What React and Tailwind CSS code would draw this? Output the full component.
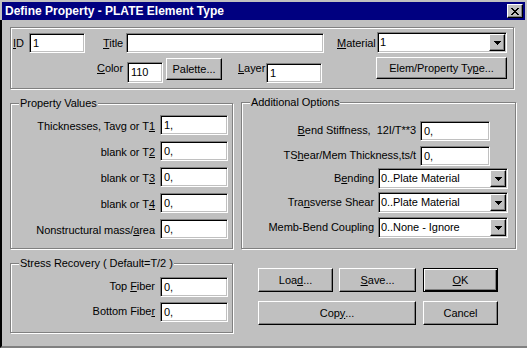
import React from "react";

const font = "font-['Liberation_Sans',Arial,sans-serif]";
const sunken =
  "bg-white border border-t-[#808080] border-l-[#808080] border-r-white border-b-white shadow-[inset_1px_1px_0_#000,inset_-1px_-1px_0_#c0c0c0]";
const raised =
  "bg-[#c0c0c0] border border-t-white border-l-white border-r-black border-b-black shadow-[inset_-1px_-1px_0_#808080]";
const defBtn =
  "bg-[#c0c0c0] border border-black shadow-[inset_1px_1px_0_#fff,inset_-1px_-1px_0_#000,inset_-2px_-2px_0_#808080]";

function U({ children }) {
  return <span className="underline decoration-1 underline-offset-[1px]">{children}</span>;
}

function Field({ className = "", children }) {
  return (
    <div className={`${sunken} flex items-center pl-[3px] whitespace-nowrap shrink-0 ${className}`}>
      {children}
    </div>
  );
}

function Arrow() {
  return (
    <svg width="7" height="4" viewBox="0 0 7 4" shapeRendering="crispEdges">
      <rect x="0" y="0" width="7" height="1" fill="#000" />
      <rect x="1" y="1" width="5" height="1" fill="#000" />
      <rect x="2" y="2" width="3" height="1" fill="#000" />
      <rect x="3" y="3" width="1" height="1" fill="#000" />
    </svg>
  );
}

function Select({ className = "", children }) {
  return (
    <div className={`${sunken} h-[21px] flex items-center shrink-0 ${className}`}>
      <span className="flex-1 pl-[2px] whitespace-nowrap overflow-hidden">{children}</span>
      <div className={`${raised} w-[16px] h-[17px] mr-[1px] flex items-center justify-center`}>
        <Arrow />
      </div>
    </div>
  );
}

function Btn({ className = "", def = false, children }) {
  return (
    <div
      className={`${def ? defBtn : raised} flex items-center justify-center whitespace-nowrap shrink-0 ${className}`}
    >
      {children}
    </div>
  );
}

function Group({ label, className = "", children }) {
  return (
    <div
      className={`relative shrink-0 border border-[#808080] shadow-[inset_1px_1px_0_#fff,1px_1px_0_#fff] ${className}`}
    >
      {label && (
        <span className="absolute left-[8px] top-[-7px] px-[1px] bg-[#c0c0c0] leading-[13px] whitespace-nowrap">
          {label}
        </span>
      )}
      {children}
    </div>
  );
}

function CloseX() {
  const rows = ["11000011", "01100110", "00111100", "00011000", "00111100", "01100110", "11000011"];
  const rects = [];
  rows.forEach((r, y) =>
    [...r].forEach((c, x) => {
      if (c === "1") rects.push(<rect key={`${x}-${y}`} x={x} y={y} width="1" height="1" fill="#000" />);
    })
  );
  return (
    <svg width="8" height="7" viewBox="0 0 8 7" shapeRendering="crispEdges">
      {rects}
    </svg>
  );
}

function PRow({ label, value, lt = "mt-[5px]" }) {
  return (
    <div className="flex items-start">
      <span className={`${lt} mr-[5px] whitespace-nowrap`}>{label}</span>
      <Field className="w-[68px] h-[20px]">{value}</Field>
    </div>
  );
}

export default function App() {
  return (
    <div
      className={`w-[527px] h-[348px] bg-[#c0c0c0] flex flex-col overflow-hidden text-black text-[11px] tracking-[-0.05px] leading-[13px] ${font}`}
    >
      {/* Title bar */}
      <div className="h-[20px] px-[2px] pt-[2px] shrink-0">
        <div className="h-[18px] bg-[#000080] flex items-center pl-[3px] pr-[2px]">
          <span className="text-white font-bold text-[12px] tracking-normal whitespace-nowrap">
            Define Property - PLATE Element Type
          </span>
          <div className={`${raised} ml-auto w-[16px] h-[14px] flex items-center justify-center`}>
            <CloseX />
          </div>
        </div>
      </div>

      {/* Body */}
      <div className="flex-1 border-l-2 border-l-black border-b-2 border-b-[#808080] pl-[8px] pt-[7px]">
        {/* Top group */}
        <Group className="w-[504px] h-[62px]">
          <div className="flex items-start mt-[4px]">
            <span className="ml-[2px] w-[16px] mt-[5px] shrink-0">
              <U>I</U>D
            </span>
            <Field className="w-[56px] h-[20px] mt-[1px]">1</Field>
            <span className="ml-[18px] w-[23px] mt-[5px] shrink-0">
              <U>T</U>itle
            </span>
            <Field className="w-[198px] h-[20px] mt-[1px]" />
            <span className="ml-[13px] w-[40px] mt-[5px] shrink-0">
              <U>M</U>aterial
            </span>
            <Select className="w-[130px]">1</Select>
          </div>
          <div className="flex items-start mt-[4px]">
            <span className="ml-[86px] w-[30px] mt-[5px] shrink-0">
              <U>C</U>olor
            </span>
            <Field className="w-[36px] h-[21px] mt-[5px]">110</Field>
            <Btn className="ml-[3px] w-[56px] h-[22px] mt-[1px]">Palette...</Btn>
            <span className="ml-[16px] w-[28px] mt-[5px] shrink-0">
              <U>L</U>ayer
            </span>
            <Field className="w-[56px] h-[20px] mt-[6px]">1</Field>
            <Btn className="ml-[54px] w-[131px] h-[22px]">
              Elem/Property Ty<U>p</U>e...
            </Btn>
          </div>
        </Group>

        {/* Middle row */}
        <div className="flex items-start mt-[13px]">
          <Group label="Property Values" className="w-[223px] h-[146px] mt-[1px]">
            <div className="flex flex-col items-end pr-[4px] pt-[11px] gap-[6px]">
              <PRow
                label={
                  <>
                    Thicknesses, Tavg or T<U>1</U>
                  </>
                }
                value="1,"
              />
              <PRow
                label={
                  <>
                    blank or T<U>2</U>
                  </>
                }
                value="0,"
              />
              <PRow
                label={
                  <>
                    blank or T<U>3</U>
                  </>
                }
                value="0,"
              />
              <PRow
                label={
                  <>
                    blank or T<U>4</U>
                  </>
                }
                value="0,"
              />
              <PRow
                label={
                  <>
                    Nonstructural mass/<U>a</U>rea
                  </>
                }
                value="0,"
              />
            </div>
          </Group>

          <Group label="Additional Options" className="ml-[8px] w-[275px] h-[147px]">
            <div className="flex flex-col items-end pt-[18px]">
              <div className="flex items-start mr-[25px]">
                <span className="mt-[3px] mr-[4px] whitespace-nowrap">
                  <U>B</U>end Stiffness,{"\u00a0"} 12I/T**3
                </span>
                <Field className="w-[70px] h-[20px]">0,</Field>
              </div>
              <div className="flex items-start mr-[25px] mt-[5px]">
                <span className="mt-[3px] mr-[4px] whitespace-nowrap">
                  TS<U>h</U>ear/Mem Thickness,ts/t
                </span>
                <Field className="w-[70px] h-[20px]">0,</Field>
              </div>
              <div className="flex items-start mr-[7px] mt-[2px]">
                <span className="mt-[4px] mr-[4px] whitespace-nowrap">
                  B<U>e</U>nding
                </span>
                <Select className="w-[130px]">0..Plate Material</Select>
              </div>
              <div className="flex items-start mr-[7px] mt-[3px]">
                <span className="mt-[4px] mr-[4px] whitespace-nowrap">
                  Tra<U>n</U>sverse Shear
                </span>
                <Select className="w-[130px]">0..Plate Material</Select>
              </div>
              <div className="flex items-start mr-[7px] mt-[4px]">
                <span className="mt-[4px] mr-[4px] whitespace-nowrap">Memb-Bend Coupling</span>
                <Select className="w-[130px]">0..None - Ignore</Select>
              </div>
            </div>
          </Group>
        </div>

        {/* Bottom row */}
        <div className="flex items-start mt-[14px]">
          <Group label="Stress Recovery ( Default=T/2 )" className="w-[223px] h-[70px]">
            <div className="flex flex-col items-end pr-[4px] pt-[13px] gap-[5px]">
              <PRow
                lt="mt-[3px]"
                label={
                  <>
                    Top <U>F</U>iber
                  </>
                }
                value="0,"
              />
              <PRow
                lt="mt-[3px]"
                label={
                  <>
                    Bottom Fibe<U>r</U>
                  </>
                }
                value="0,"
              />
            </div>
          </Group>

          <div className="ml-[25px] mt-[5px] flex flex-col gap-[9px]">
            <div className="flex">
              <Btn className="w-[75px] h-[24px]">
                Loa<U>d</U>...
              </Btn>
              <Btn className="ml-[6px] w-[77px] h-[24px]">
                <U>S</U>ave...
              </Btn>
              <Btn def className="ml-[7px] w-[75px] h-[24px]">
                <U>O</U>K
              </Btn>
            </div>
            <div className="flex">
              <Btn className="w-[158px] h-[24px]">
                Cop<U>y</U>...
              </Btn>
              <Btn className="ml-[7px] w-[75px] h-[24px]">Cancel</Btn>
            </div>
          </div>
        </div>
      </div>
    </div>
  );
}
